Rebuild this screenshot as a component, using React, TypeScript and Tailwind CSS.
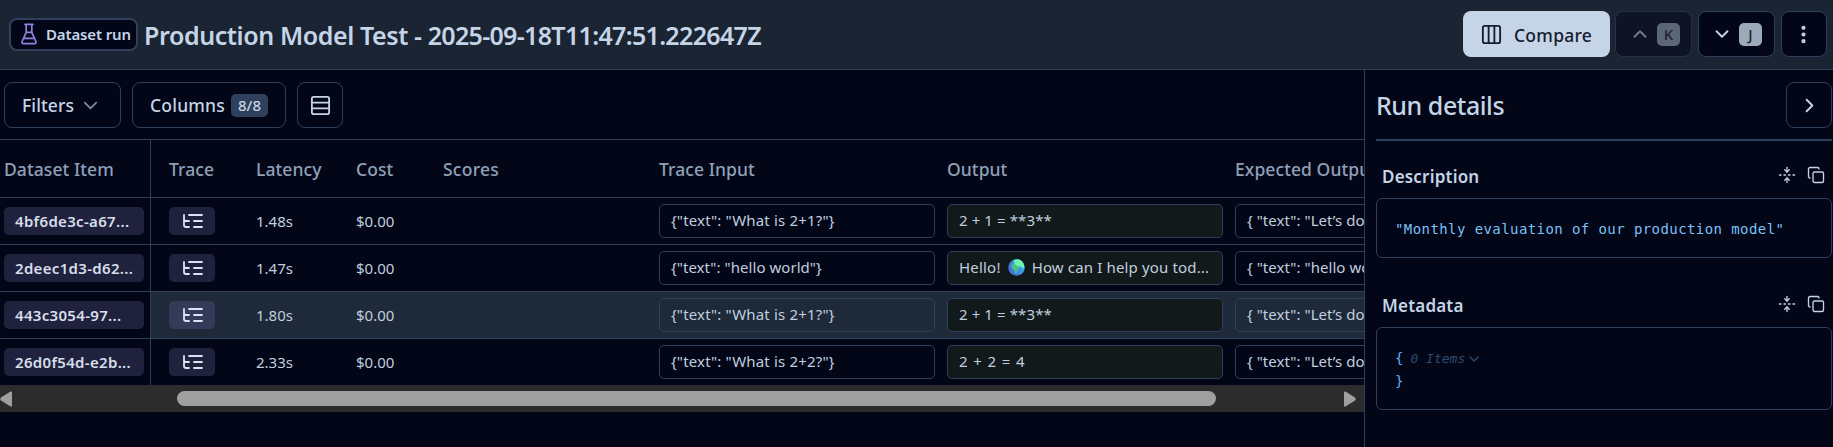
import React from "react";
import {
  ChevronDown,
  ChevronUp,
  ChevronRight,
  Columns3,
  Copy,
  EllipsisVertical,
  FoldVertical,
  Rows3,
} from "lucide-react";

type Row = { id: string; latency: string; input: string; output: string; expected: string; wide?: boolean; active?: boolean };

const rows: Row[] = [
  { id: "4bf6de3c-a67...", latency: "1.48s", input: '{"text": "What is 2+1?"}', output: "2 + 1 = **3**", expected: '{ "text": "Let’s do the math"}' },
  { id: "2deec1d3-d62...", latency: "1.47s", input: '{"text": "hello world"}', output: "globe", expected: '{ "text": "hello world"}' },
  { id: "443c3054-97...", latency: "1.80s", input: '{"text": "What is 2+1?"}', output: "2 + 1 = **3**", expected: '{ "text": "Let’s do the math"}', active: true },
  { id: "26d0f54d-e2b...", latency: "2.33s", input: '{"text": "What is 2+2?"}', output: "2 + 2 = 4", expected: '{ "text": "Let’s do the math"}', wide: true },
];

function Flask() {
  return (
    <svg width="16" height="22" viewBox="0 0 16 22" fill="none" stroke="#8f83dd" strokeWidth="1.7" strokeLinejoin="round" strokeLinecap="round">
      <path d="M4 1.300h8M5.200 1.300v8L1.100 18.500q-.5 2.100 1.200 2.100h11.400q1.700 0 1.200-2.100L10.800 9.300v-8M5.200 9.300h5.600M3 15.300h10" />
    </svg>
  );
}

function TreeIcon() {
  return (
    <svg width="24" height="24" viewBox="0 0 24 24" fill="none" stroke="currentColor" strokeWidth="1.8" strokeLinejoin="round" strokeLinecap="round">
      <path d="M21 12h-8M21 6H8M21 18h-8M3 6v4c0 1.100.9 2 2 2h3M3 10v6c0 1.100.9 2 2 2h3" />
    </svg>
  );
}

function Globe() {
  return (
    <svg width="17" height="17" viewBox="0 0 17 17" className="shrink-0">
      <defs>
        <linearGradient id="sea" x1="0" y1="0.800" x2="1" y2="0.300">
          <stop offset="0" stopColor="#4a62d0" />
          <stop offset="1" stopColor="#2fb4f5" />
        </linearGradient>
      </defs>
      <circle cx="8.500" cy="8.500" r="8.300" fill="url(#sea)" />
      <path d="M3.500 6.500Q4.500 4 7 4.200l4 2.300 1 1.500-2.500 3-.5 3-2 .5-.8-4-2.700-1z" fill="#4fc088" />
      <path d="M5.500 1.200Q12-1.500 15.500 4.500l.8 3-1.500 2.500-1.800-2.500-3-.3-3-2z" fill="#6ff3b0" />
    </svg>
  );
}

function Kbd({ children }: { children: string }) {
  return <span className="flex size-[23px] shrink-0 items-center justify-center rounded-[5px] bg-[#9ca9b9] text-[15px] font-medium text-[#1a2332]">{children}</span>;
}

function Cell({ children, className = "" }: { children: React.ReactNode; className?: string }) {
  return (
    <div className={`flex h-[34px] w-[276px] shrink-0 items-center overflow-hidden whitespace-pre rounded-[5px] border border-[#2e405b] pb-[2px] pl-[11px] text-[15px] text-[#c0cfdf] ${className}`}>
      {children}
    </div>
  );
}

function Section({ title, children }: { title: string; children: React.ReactNode }) {
  return (
    <section>
      <div className="flex h-6 items-center justify-between pl-[6px] pr-[7px]">
        <h3 className="pt-[2px] text-[17px] font-semibold tracking-[0.200px]">{title}</h3>
        <div className="flex items-center gap-[11px] pb-[2px]">
          <FoldVertical size={18} strokeWidth={1.800} />
          <Copy size={18} strokeWidth={1.800} />
        </div>
      </div>
      {children}
    </section>
  );
}

export default function App() {
  return (
    <div className="flex h-[447px] w-[1833px] flex-col overflow-hidden bg-[#020617] font-['Noto_Sans',sans-serif] text-[#c5d5e7]">
      <header className="flex h-[70px] shrink-0 items-center border-b border-[#2e405b] bg-[#1b2433] pl-[9px] pr-[6px] pb-[1px]">
        <div className="flex h-[33px] w-[129px] items-center rounded-[8px] border-2 border-[#2e405b] bg-[#020617] pl-[10px]">
          <Flask />
          <span className="ml-[9px] whitespace-nowrap pt-[1px] text-[15px] font-semibold tracking-[-0.130px]">Dataset run</span>
        </div>
        <h1 className="ml-[6px] whitespace-nowrap pt-[3px] text-[25px] font-semibold">
          <span className="tracking-[-0.410px]">Production Model Test - </span>
          <span className="tracking-[-0.670px]">2025-09-18T11:47:51.222647Z</span>
        </h1>
        <div className="ml-auto flex">
          <button className="flex h-[46px] w-[147px] items-center rounded-[8px] bg-[#c5d5e7] pl-[17px] text-[17.500px] font-medium text-[#141c2e]">
            <Columns3 size={23} strokeWidth={1.900} />
            <span className="ml-[11px] pt-[2px] tracking-[0.250px]">Compare</span>
          </button>
          <button className="ml-[5px] flex h-[46px] w-[77px] items-center gap-[6px] rounded-[8px] border border-[#2e405b] bg-[#020617] pl-[13px] opacity-50">
            <ChevronUp size={22} strokeWidth={2} />
            <Kbd>K</Kbd>
          </button>
          <button className="ml-[6px] flex h-[46px] w-[77px] items-center gap-[6px] rounded-[8px] border border-[#2e405b] bg-[#020617] pl-[12px]">
            <ChevronDown size={22} strokeWidth={2} />
            <Kbd>J</Kbd>
          </button>
          <button className="ml-[6px] flex size-[46px] items-center justify-center rounded-[8px] border border-[#2e405b] bg-[#020617] pr-[2px]">
            <EllipsisVertical size={23} strokeWidth={2.400} />
          </button>
        </div>
      </header>

      <div className="flex min-h-0 flex-1">
        <main className="flex w-[1364px] shrink-0 flex-col overflow-hidden">
          <div className="flex h-[69px] shrink-0 gap-[11px] pl-[4px] pt-[12px] text-[17.500px] font-medium">
            <button className="flex h-[46px] w-[117px] items-center rounded-[8px] border border-[#2e405b] pl-[17px]">
              <span className="w-[57px] text-left tracking-[0.100px]">Filters</span>
              <ChevronDown className="text-[#8291a6]" size={23} strokeWidth={1.600} />
            </button>
            <button className="flex h-[46px] w-[154px] items-center rounded-[8px] border border-[#2e405b] pl-[17px]">
              <span className="w-[81px] text-left tracking-[0.200px]">Columns</span>
              <span className="flex h-[23px] w-[37px] items-center justify-center rounded-[5px] bg-[#2e405b] text-[15px]">8/8</span>
            </button>
            <button className="flex size-[46px] items-center justify-center rounded-[8px] border border-[#2e405b]">
              <Rows3 size={23} strokeWidth={1.900} />
            </button>
          </div>

          <div className="flex h-[59px] shrink-0 items-center whitespace-nowrap border-y border-[#2e405b] text-[17.500px] font-medium tracking-[0.080px] text-[#8fa0b7]">
            <div className="flex h-full w-[151px] shrink-0 items-center border-r border-[#2e405b] pl-[4px] pt-[2px]">Dataset Item</div>
            <div className="w-[105px] shrink-0 pl-[18px] pt-[2px]">Trace</div>
            <div className="w-[100px] shrink-0 pt-[2px]">Latency</div>
            <div className="w-[87px] shrink-0 pt-[2px]">Cost</div>
            <div className="w-[216px] shrink-0 pt-[2px] tracking-[0.250px]">Scores</div>
            <div className="w-[288px] shrink-0 pt-[2px]">Trace Input</div>
            <div className="w-[288px] shrink-0 pt-[2px]">Output</div>
            <div className="shrink-0 pt-[2px]">Expected Output</div>
          </div>

          {rows.map((r) => (
            <div key={r.id} className={`flex h-[47px] shrink-0 items-center whitespace-nowrap border-b border-[#2e405b] text-[15px] ${r.active ? "bg-[#1e293a]" : ""}`}>
              <div className="flex h-full w-[151px] shrink-0 items-center border-r border-[#2e405b] bg-[#020617] pl-[4px]">
                <span className="flex h-[28px] w-[140px] items-center rounded-[5px] bg-[#20213d] pl-[11px] pt-[1px] font-semibold tracking-[0.320px] text-[#d6dfeb]">{r.id}</span>
              </div>
              <div className="w-[105px] shrink-0 pl-[18px]">
                <span className={`flex h-[28px] w-[46px] items-center justify-center rounded-[5px] pl-[2px] text-[#dbe3f3] ${r.active ? "bg-[#343b5a]" : "bg-[#20213d]"}`}>
                  <TreeIcon />
                </span>
              </div>
              <div className="w-[100px] shrink-0 text-[#c0cfdf]">{r.latency}</div>
              <div className="w-[303px] shrink-0 text-[#c0cfdf]">$0.00</div>
              <Cell className={r.output === "globe" ? "tracking-[0.050px]" : "tracking-[0.170px]"}>{r.input}</Cell>
              <Cell className={`ml-[12px] bg-[#12191b] ${r.wide ? "tracking-[0.900px]" : "tracking-[0.100px]"}`}>
                {r.output === "globe" ? (
                  <>
                    <span className="mr-[7px] tracking-[0.200px]">Hello!</span>
                    <Globe />
                    <span className="ml-[7px] tracking-[0.150px]">How can I help you tod...</span>
                  </>
                ) : (
                  r.output
                )}
              </Cell>
              <Cell className="ml-[12px] tracking-[0.050px]">{r.expected}</Cell>
            </div>
          ))}

          <div className="-mt-px flex h-[27px] shrink-0 items-center bg-[#2c2c2c]">
            <svg width="12" height="16" viewBox="0 0 12 16" fill="#9f9f9f"><path d="M12 1.500v13q0 1.500-1.500 1L1 9.500Q-.5 8 1 6.500L10.500.5Q12 0 12 1.500z" /></svg>
            <div className="ml-[165px] h-[15px] w-[1039px] rounded-full bg-[#9f9f9f]" />
            <svg className="ml-[128px]" width="12" height="16" viewBox="0 0 12 16" fill="#9f9f9f"><path d="M0 1.500v13q0 1.500 1.500 1L11 9.500q1.500-1.500 0-3L1.500.5Q0 0 0 1.500z" /></svg>
          </div>
        </main>

        <aside className="flex-1 border-l border-[#2e405b]">
          <div className="ml-[11px] mr-[1px] flex h-[71px] items-start justify-between border-b-2 border-[#2e405b] pt-[12px]">
            <h2 className="flex h-[46px] items-center whitespace-nowrap pt-[1px] text-[25px] font-medium tracking-[-0.450px]">Run details</h2>
            <button className="flex size-[46px] items-center justify-center rounded-[8px] border border-[#2e405b]">
              <ChevronRight size={23} strokeWidth={2} />
            </button>
          </div>
          <div className="ml-[11px] mr-[1px] pt-[23px]">
            <Section title="Description">
              <div className="mt-[10px] flex h-[60px] items-center whitespace-nowrap rounded-[6px] border border-[#2e405b] pl-[18px] pt-[2px] font-['DejaVu_Sans_Mono',monospace] text-[14px] tracking-[0.420px] text-[#7cc0f8]">
                "Monthly evaluation of our production model"
              </div>
            </Section>
            <div className="h-[35px]" />
            <Section title="Metadata">
              <div className="mt-[10px] h-[83px] rounded-[6px] border border-[#2e405b] pl-[18px] pt-[19px] font-['DejaVu_Sans_Mono',monospace] text-[14px] leading-[23px] text-[#58b0ff]">
                <div className="flex h-[23px] items-center">
                  {"{"}
                  <span className="ml-[7px] text-[13px] italic text-[#2e4a70]">0 Items</span>
                  <ChevronDown className="ml-[1px] text-[#2e4a70]" size={16} />
                </div>
                <div>{"}"}</div>
              </div>
            </Section>
          </div>
        </aside>
      </div>
    </div>
  );
}
